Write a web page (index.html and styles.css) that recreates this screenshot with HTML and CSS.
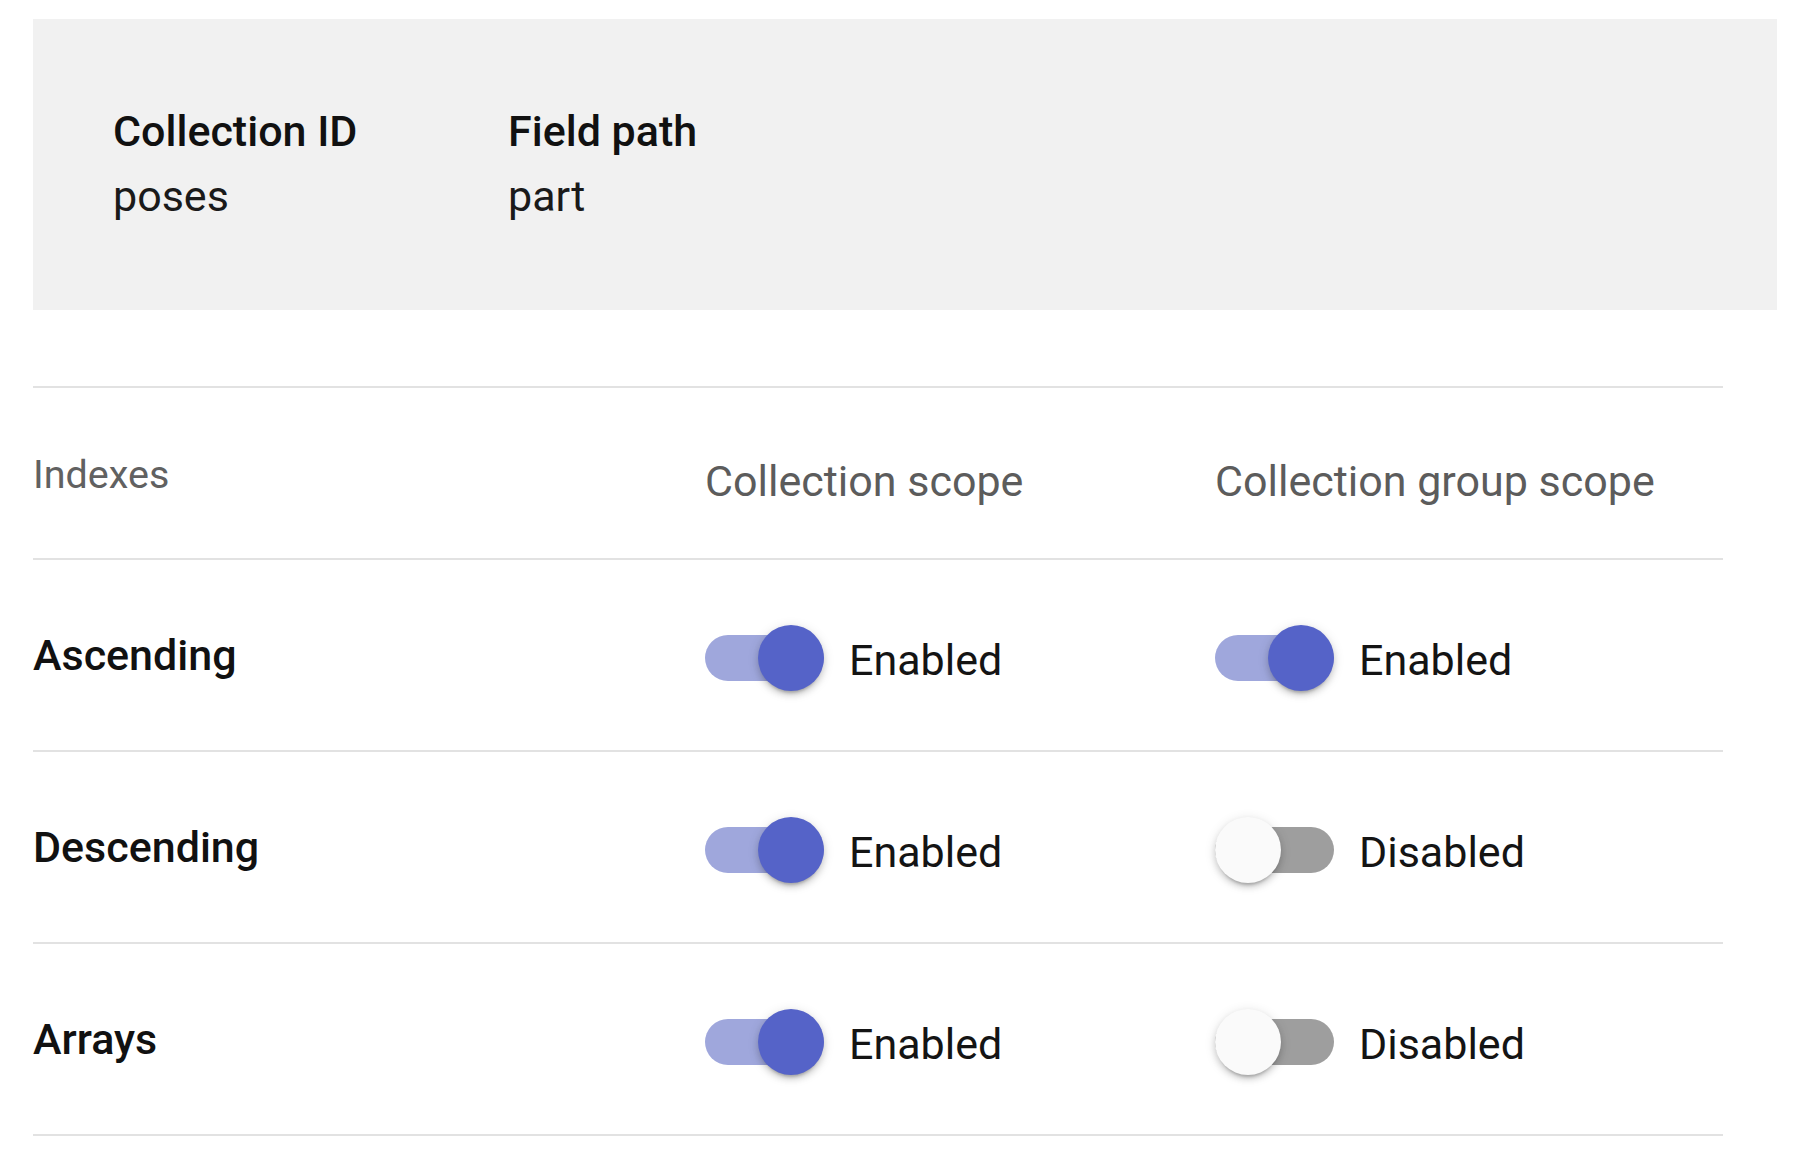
FILE: index.html
```html
<!DOCTYPE html>
<html lang="en">
<head>
<meta charset="utf-8">
<title>Index settings</title>
<link rel="stylesheet" href="styles.css">
</head>
<body>
  <section class="summary">
    <div class="summary-item summary-item--id">
      <div class="summary-label">Collection ID</div>
      <div class="summary-value">poses</div>
    </div>
    <div class="summary-item">
      <div class="summary-label">Field path</div>
      <div class="summary-value">part</div>
    </div>
  </section>

  <section class="index-table">
    <div class="row row--head">
      <div class="cell cell--name head-indexes">Indexes</div>
      <div class="cell head-scope">Collection scope</div>
      <div class="cell head-scope">Collection group scope</div>
    </div>

    <div class="row">
      <div class="cell cell--name row-label">Ascending</div>
      <div class="cell scope">
        <span class="toggle toggle--on"><span class="track"></span><span class="thumb"></span></span>
        <span class="state">Enabled</span>
      </div>
      <div class="cell scope">
        <span class="toggle toggle--on"><span class="track"></span><span class="thumb"></span></span>
        <span class="state">Enabled</span>
      </div>
    </div>

    <div class="row">
      <div class="cell cell--name row-label">Descending</div>
      <div class="cell scope">
        <span class="toggle toggle--on"><span class="track"></span><span class="thumb"></span></span>
        <span class="state">Enabled</span>
      </div>
      <div class="cell scope">
        <span class="toggle toggle--off"><span class="track"></span><span class="thumb"></span></span>
        <span class="state">Disabled</span>
      </div>
    </div>

    <div class="row row--last">
      <div class="cell cell--name row-label">Arrays</div>
      <div class="cell scope">
        <span class="toggle toggle--on"><span class="track"></span><span class="thumb"></span></span>
        <span class="state">Enabled</span>
      </div>
      <div class="cell scope">
        <span class="toggle toggle--off"><span class="track"></span><span class="thumb"></span></span>
        <span class="state">Disabled</span>
      </div>
    </div>
  </section>
</body>
</html>
```
FILE: styles.css
```css
* {
  box-sizing: border-box;
}

html, body {
  margin: 0;
  padding: 0;
  background: #ffffff;
}

body {
  font-family: Roboto, "Liberation Sans", Arial, sans-serif;
  color: rgba(0, 0, 0, 0.87);
  width: 1800px;
}

/* Top summary panel */
.summary {
  display: flex;
  margin: 19px 23px 0 33px;
  height: 291px;
  padding: 80px 0 0 80px;
  background: #f1f1f1;
}

.summary-item--id {
  width: 395px;
}

.summary-label {
  font-size: 43px;
  font-weight: 500;
  line-height: 65px;
  color: #111;
}

.summary-value {
  font-size: 43px;
  font-weight: 400;
  line-height: 65px;
  color: #1a1a1a;
}

/* Index table */
.index-table {
  width: 1690px;
  margin: 76px 0 0 33px;
}

.row {
  display: grid;
  grid-template-columns: 672px 510px 1fr;
  align-items: center;
  height: 192px;
  border-top: 2px solid #e2e2e2;
}

.row--head {
  height: 172px;
  align-items: start;
}

.row--last {
  height: 194px;
  border-bottom: 2px solid #e2e2e2;
}

.head-indexes {
  font-size: 39.5px;
  line-height: 50px;
  color: #616161;
  padding-top: 62px;
}

.head-scope {
  font-size: 43px;
  line-height: 50px;
  color: #5c5c5c;
  padding-top: 68px;
}

.row-label {
  font-size: 43px;
  font-weight: 500;
  line-height: 50px;
  color: #111;
}

.scope {
  display: flex;
  align-items: center;
  margin-top: 6px;
}

.state {
  font-size: 43px;
  line-height: 50px;
  color: #141414;
  margin-left: 25px;
  margin-top: 4px;
}

/* Slide toggle */
.toggle {
  position: relative;
  display: inline-block;
  width: 119px;
  height: 66px;
  flex: none;
}

.track {
  position: absolute;
  left: 0;
  right: 0;
  top: 10px;
  height: 46px;
  border-radius: 23px;
}

.thumb {
  position: absolute;
  top: 0;
  width: 66px;
  height: 66px;
  border-radius: 50%;
  box-shadow: 0 6px 3px -4px rgba(0, 0, 0, 0.2),
              0 4px 6px 0 rgba(0, 0, 0, 0.14),
              0 2px 12px 0 rgba(0, 0, 0, 0.12);
}

.toggle--on .track {
  background: #9fa7dc;
}

.toggle--on .thumb {
  right: 0;
  background: #5563c8;
}

.toggle--off .track {
  background: #9e9e9e;
}

.toggle--off .thumb {
  left: 0;
  background: #fafafa;
}
```
